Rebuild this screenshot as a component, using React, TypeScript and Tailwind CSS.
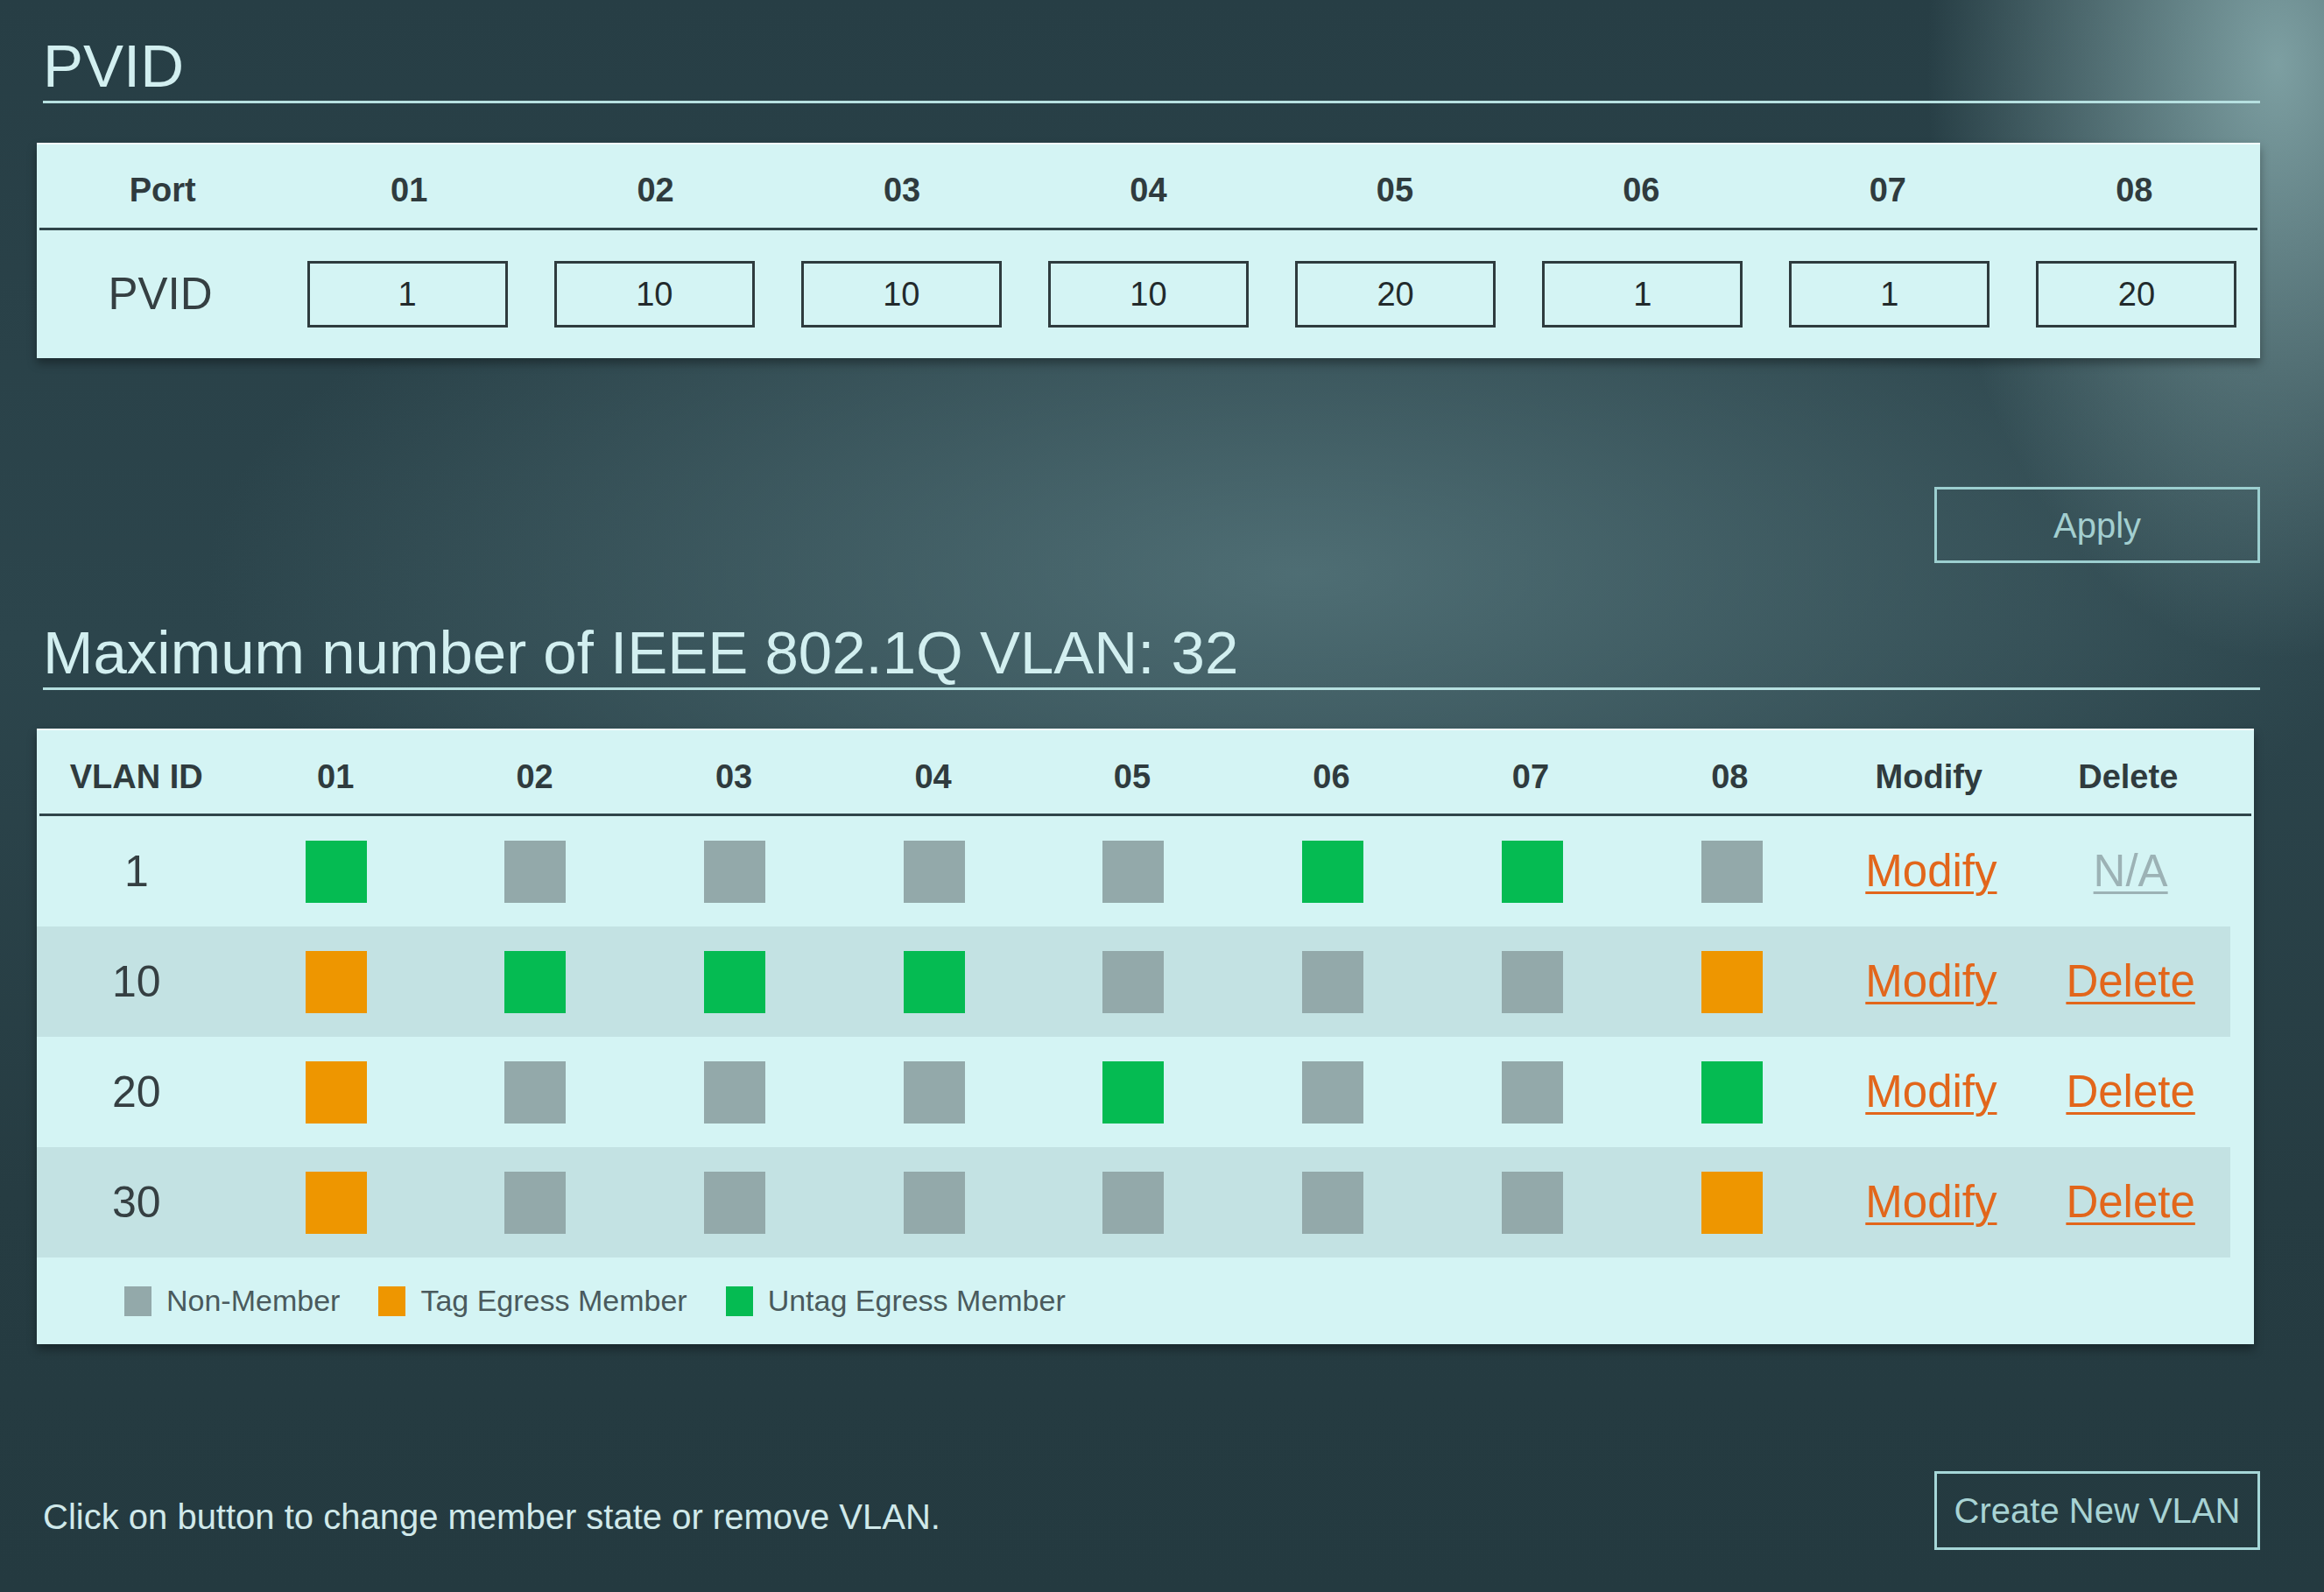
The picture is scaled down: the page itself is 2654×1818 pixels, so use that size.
import React from 'react'

type Member = 'n' | 't' | 'u'

const ports = ['01', '02', '03', '04', '05', '06', '07', '08']
const pvids = ['1', '10', '10', '10', '20', '1', '1', '20']

const vlans: { id: string; members: Member[]; canDelete: boolean }[] = [
  { id: '1', members: ['u', 'n', 'n', 'n', 'n', 'u', 'u', 'n'], canDelete: false },
  { id: '10', members: ['t', 'u', 'u', 'u', 'n', 'n', 'n', 't'], canDelete: true },
  { id: '20', members: ['t', 'n', 'n', 'n', 'u', 'n', 'n', 'u'], canDelete: true },
  { id: '30', members: ['t', 'n', 'n', 'n', 'n', 'n', 'n', 't'], canDelete: true },
]

const memberColor: Record<Member, string> = {
  n: 'bg-[#93a9aa]',
  t: 'bg-[#ee9600]',
  u: 'bg-[#05bb52]',
}

function SectionTitle({ children }: { children: React.ReactNode }) {
  return (
    <div className="ml-[7px] border-b-[3px] border-[#b6e0e0] pb-[5px]">
      <h2 className="text-[69px] leading-none font-normal text-[#d2eff0]">{children}</h2>
    </div>
  )
}

function Legend({ color, label }: { color: string; label: string }) {
  return (
    <div className="flex items-center gap-[17px]">
      <span className={`w-[31px] h-[34px] ${color}`} />
      <span className="text-[34px] text-[#4a5a5d]">{label}</span>
    </div>
  )
}

export default function App() {
  return (
    <div
      className="w-[2654px] h-[1818px] overflow-hidden bg-[#263c42] bg-[image:radial-gradient(ellipse_400px_680px_at_98%_4%,rgba(140,176,178,0.85),rgba(140,176,178,0)_100%),radial-gradient(ellipse_1250px_480px_at_56%_36%,rgba(82,114,120,0.9),rgba(82,114,120,0)_100%),linear-gradient(180deg,#273e45_0%,#2c454c_40%,#263c42_75%,#243a40_100%)]"
      style={{ fontFamily: '"Liberation Sans", Arial, sans-serif' }}
    >
      <div className="flex flex-col pl-[42px] pr-[73px] pt-[41px]">
        <SectionTitle>PVID</SectionTitle>

        {/* PVID table */}
        <div className="mt-[45px] bg-[#d4f4f4] border-t-2 border-[#f2ffff] shadow-[0_6px_10px_rgba(0,0,0,0.35)]">
          <div className="grid grid-cols-9 h-[98px] pt-[10px] items-center border-b-[3px] border-[#2f4449] mx-[3px]">
            <div className="text-center text-[38px] font-bold text-[#2f3b3e]">Port</div>
            {ports.map((p) => (
              <div key={p} className="text-center text-[38px] font-bold text-[#2f3b3e]">{p}</div>
            ))}
          </div>
          <div className="grid grid-cols-9 h-[146px] items-center">
            <div className="text-center text-[51px] text-[#353f42]">PVID</div>
            {pvids.map((v, i) => (
              <div key={i} className="flex justify-center">
                <div className="w-[229px] h-[76px] border-[3px] border-[#2e3b3e] flex items-center justify-center text-[38px] text-[#222a2c]">
                  {v}
                </div>
              </div>
            ))}
          </div>
        </div>

        <button className="self-end mt-[147px] w-[372px] h-[87px] border-[3px] border-[#9ccfd0] text-[40px] text-[#a3cfd0]">
          Apply
        </button>

        <div className="mt-[68px]">
          <SectionTitle>Maximum number of IEEE 802.1Q VLAN: 32</SectionTitle>
        </div>

        {/* VLAN table */}
        <div className="mt-[44px] w-[2532px] bg-[#d4f4f4] border-t-2 border-[#f2ffff] shadow-[0_6px_10px_rgba(0,0,0,0.35)]">
          <div className="h-[98px] border-b-[3px] border-[#2f4449] mx-[3px]">
            <div className="grid grid-cols-11 w-[2502px] h-full pt-[12px] items-center -ml-[3px]">
              {['VLAN ID', ...ports, 'Modify', 'Delete'].map((h) => (
                <div key={h} className="text-center text-[38px] font-bold text-[#2f3b3e]">{h}</div>
              ))}
            </div>
          </div>
          {vlans.map((v, r) => (
            <div
              key={v.id}
              className={`grid grid-cols-11 w-[2505px] h-[126px] items-center ${r % 2 === 1 ? 'bg-[#c3e2e3]' : ''}`}
            >
              <div className="text-center text-[50px] text-[#353f42]">{v.id}</div>
              {v.members.map((m, i) => (
                <div key={i} className="flex justify-center">
                  <span className={`w-[70px] h-[71px] ${memberColor[m]}`} />
                </div>
              ))}
              <div className="text-center">
                <a className="text-[51px] text-[#e2661b] underline decoration-[3px] underline-offset-[6px] cursor-pointer">Modify</a>
              </div>
              <div className="text-center">
                {v.canDelete ? (
                  <a className="text-[51px] text-[#e2661b] underline decoration-[3px] underline-offset-[6px] cursor-pointer">Delete</a>
                ) : (
                  <span className="text-[51px] text-[#9cb2b5] underline decoration-[3px] underline-offset-[6px]">N/A</span>
                )}
              </div>
            </div>
          ))}
          <div className="h-[99px] flex items-center gap-[44px] pl-[100px]">
            <Legend color="bg-[#93a9aa]" label="Non-Member" />
            <Legend color="bg-[#ee9600]" label="Tag Egress Member" />
            <Legend color="bg-[#05bb52]" label="Untag Egress Member" />
          </div>
        </div>

        <div className="mt-[145px] flex items-center justify-between">
          <p className="ml-[7px] mt-[14px] text-[40px] text-[#d0e9ea]">
            Click on button to change member state or remove VLAN.
          </p>
          <button className="w-[372px] h-[90px] border-[3px] border-[#a6d7d8] text-[40px] text-[#a8d3d4]">
            Create New VLAN
          </button>
        </div>
      </div>
    </div>
  )
}
